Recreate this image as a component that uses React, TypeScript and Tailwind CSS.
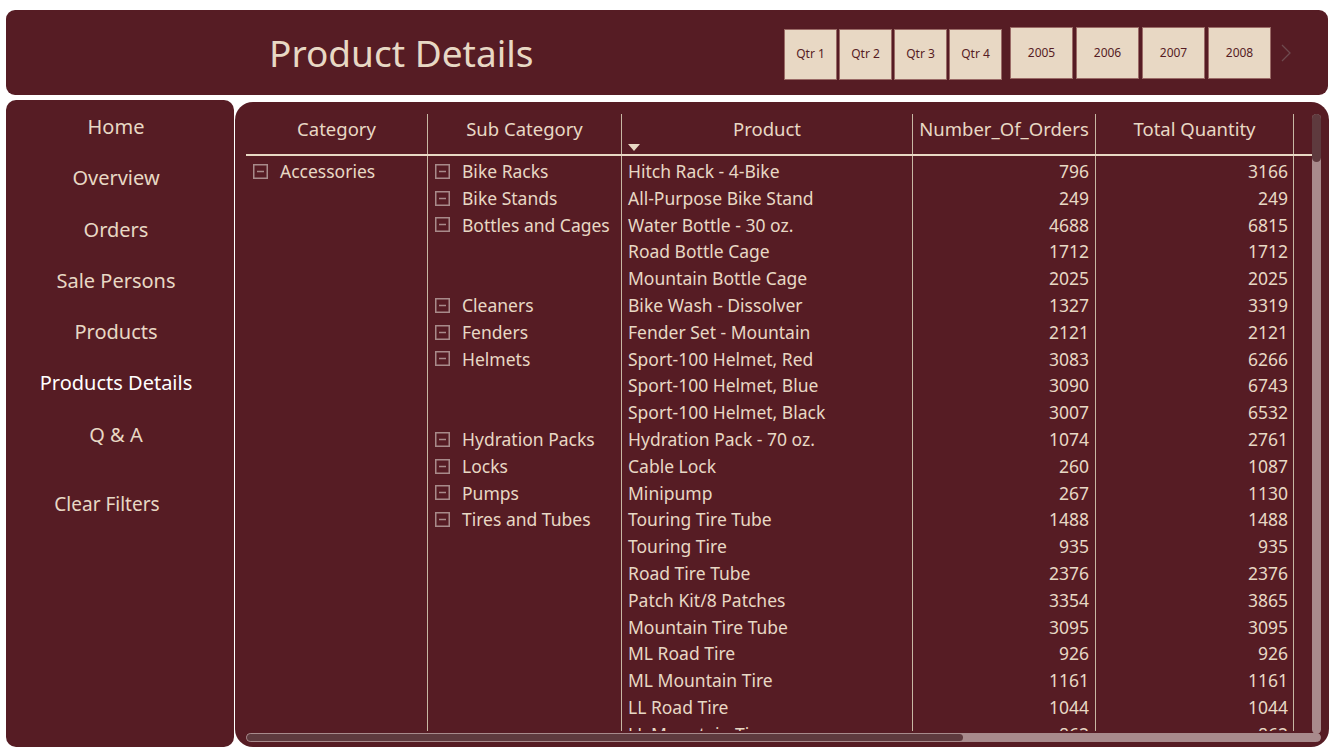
import React from "react";

const font = { fontFamily: "'Noto Sans', 'Open Sans', sans-serif" };

type Row = { cat?: string; sub?: string; product: string; orders: number; qty: number };

const rows: Row[] = [
  { cat: "Accessories", sub: "Bike Racks", product: "Hitch Rack - 4-Bike", orders: 796, qty: 3166 },
  { sub: "Bike Stands", product: "All-Purpose Bike Stand", orders: 249, qty: 249 },
  { sub: "Bottles and Cages", product: "Water Bottle - 30 oz.", orders: 4688, qty: 6815 },
  { product: "Road Bottle Cage", orders: 1712, qty: 1712 },
  { product: "Mountain Bottle Cage", orders: 2025, qty: 2025 },
  { sub: "Cleaners", product: "Bike Wash - Dissolver", orders: 1327, qty: 3319 },
  { sub: "Fenders", product: "Fender Set - Mountain", orders: 2121, qty: 2121 },
  { sub: "Helmets", product: "Sport-100 Helmet, Red", orders: 3083, qty: 6266 },
  { product: "Sport-100 Helmet, Blue", orders: 3090, qty: 6743 },
  { product: "Sport-100 Helmet, Black", orders: 3007, qty: 6532 },
  { sub: "Hydration Packs", product: "Hydration Pack - 70 oz.", orders: 1074, qty: 2761 },
  { sub: "Locks", product: "Cable Lock", orders: 260, qty: 1087 },
  { sub: "Pumps", product: "Minipump", orders: 267, qty: 1130 },
  { sub: "Tires and Tubes", product: "Touring Tire Tube", orders: 1488, qty: 1488 },
  { product: "Touring Tire", orders: 935, qty: 935 },
  { product: "Road Tire Tube", orders: 2376, qty: 2376 },
  { product: "Patch Kit/8 Patches", orders: 3354, qty: 3865 },
  { product: "Mountain Tire Tube", orders: 3095, qty: 3095 },
  { product: "ML Road Tire", orders: 926, qty: 926 },
  { product: "ML Mountain Tire", orders: 1161, qty: 1161 },
  { product: "LL Road Tire", orders: 1044, qty: 1044 },
  { product: "LL Mountain Tire", orders: 862, qty: 862 },
];

const nav = ["Home", "Overview", "Orders", "Sale Persons", "Products", "Products Details", "Q & A"];
const quarters = ["Qtr 1", "Qtr 2", "Qtr 3", "Qtr 4"];
const years = ["2005", "2006", "2007", "2008"];

function Minus() {
  return (
    <svg width="15" height="15" viewBox="0 0 15 15" className="shrink-0">
      <rect x="0.75" y="0.75" width="13.5" height="13.5" fill="none" stroke="#a88a8a" strokeWidth="1.5" />
      <line x1="4" y1="7.5" x2="11" y2="7.5" stroke="#a88a8a" strokeWidth="1.5" />
    </svg>
  );
}

export default function App() {
  return (
    <div className="h-[753px] w-[1338px] overflow-hidden bg-white" style={font}>
      <header className="mx-[6px] mt-[10px] flex h-[85px] w-[1322px] items-center rounded-[9px] bg-[#561c24]">
        <h1 className="ml-[263px] text-[37px] leading-none text-[#e8d8c4]">Product Details</h1>
        <div className="ml-auto mr-[36px] flex items-center">
          <div className="mt-[3px] flex gap-[2px]">
            {quarters.map((q) => (
              <div key={q} className="flex h-[51px] w-[53px] items-center justify-center border border-[#9a6a66] bg-[#e8d8c4] text-[12px] text-[#561c24]">
                {q}
              </div>
            ))}
          </div>
          <div className="ml-[8px] flex gap-[3px]">
            {years.map((y) => (
              <div key={y} className="flex h-[52px] w-[63px] items-center justify-center border border-[#9a6a66] bg-[#e8d8c4] text-[12px] text-[#561c24]">
                {y}
              </div>
            ))}
          </div>
          <svg width="12" height="20" viewBox="0 0 12 20" className="ml-[9px]">
            <path d="M2 2 L10 10 L2 18" fill="none" stroke="#6e4a4e" strokeWidth="1.3" />
          </svg>
        </div>
      </header>

      <div className="mx-[6px] mt-[5px] flex">
        <nav className="flex h-[647px] w-[228px] flex-col items-center rounded-[10px] bg-[#561c24] pr-[8px] pt-[12px] text-[20px] text-[#e8d8c4]">
          {nav.map((n) => (
            <div
              key={n}
              className={`flex h-[51.3px] items-start ${n === "Products Details" ? "text-white" : ""}`}
            >
              {n}
            </div>
          ))}
          <div className="mt-[19px] -ml-[18px] text-[19px]">Clear Filters</div>
        </nav>

        <main className="ml-[1px] mt-[2px] h-[645px] w-[1094px] rounded-[18px] bg-[#561c24] pl-[11px] pt-[12px]">
          <div className="flex">
            <div className="h-[617px] w-[1066px] overflow-hidden text-[#e8d8c4]">
              <div className="flex h-[42px] border-b-2 border-[#e8d8c4] text-[18.5px]">
                <div className="flex w-[181px] items-start justify-center pt-[1px]">Category</div>
                <div className="flex w-[194px] items-start justify-center border-l border-[#c7b7a3] pt-[1px]">Sub Category</div>
                <div className="relative flex w-[291px] items-start justify-center border-l border-[#c7b7a3] pt-[1px]">
                  Product
                  <svg width="12" height="7" viewBox="0 0 12 7" className="absolute bottom-[3px] left-[6px]">
                    <path d="M0 0 H12 L6 7 Z" fill="#e8d8c4" />
                  </svg>
                </div>
                <div className="flex w-[183px] items-start justify-center border-l border-[#c7b7a3] pt-[1px]">Number_Of_Orders</div>
                <div className="flex w-[199px] items-start justify-center border-x border-[#c7b7a3] pt-[1px]">Total Quantity</div>
              </div>
              <div className="text-[17.5px]">
                <div className="flex h-[2px]">
                  <div className="w-[181px]" />
                  <div className="w-[194px] border-l border-[#c7b7a3]" />
                  <div className="w-[291px] border-l border-[#c7b7a3]" />
                  <div className="w-[183px] border-l border-[#c7b7a3]" />
                  <div className="w-[199px] border-x border-[#c7b7a3]" />
                </div>
                {rows.map((r, i) => (
                  <div key={i} className="flex h-[26.8px] leading-[26.8px]">
                    <div className="flex w-[181px] items-center gap-[12px] pl-[7px]">
                      {r.cat && (
                        <>
                          <Minus />
                          <span>{r.cat}</span>
                        </>
                      )}
                    </div>
                    <div className="flex w-[194px] items-center gap-[12px] border-l border-[#c7b7a3] pl-[7px]">
                      {r.sub && (
                        <>
                          <Minus />
                          <span>{r.sub}</span>
                        </>
                      )}
                    </div>
                    <div className="w-[291px] whitespace-nowrap border-l border-[#c7b7a3] pl-[6px]">{r.product}</div>
                    <div className="w-[183px] border-l border-[#c7b7a3] pr-[6px] text-right">{r.orders}</div>
                    <div className="w-[199px] border-x border-[#c7b7a3] pr-[5px] text-right">{r.qty}</div>
                  </div>
                ))}
                <div className="flex h-[30px]">
                  <div className="w-[181px]" />
                  <div className="w-[194px] border-l border-[#c7b7a3]" />
                  <div className="w-[291px] border-l border-[#c7b7a3]" />
                  <div className="w-[183px] border-l border-[#c7b7a3]" />
                  <div className="w-[199px] border-x border-[#c7b7a3]" />
                </div>
              </div>
            </div>
            <div className="h-[620px] w-[9px] rounded-full bg-[#a88a8c]">
              <div className="h-[48px] w-[9px] rounded-full bg-[#5e3a3e]" />
            </div>
          </div>
          <div className="-mt-[1px] h-[9px] w-[1075px] rounded-full border border-[#a88a8c] bg-[#a88a8c]">
            <div className="h-[7px] w-[716px] rounded-full bg-[#5e3a3e]" />
          </div>
        </main>
      </div>
    </div>
  );
}
